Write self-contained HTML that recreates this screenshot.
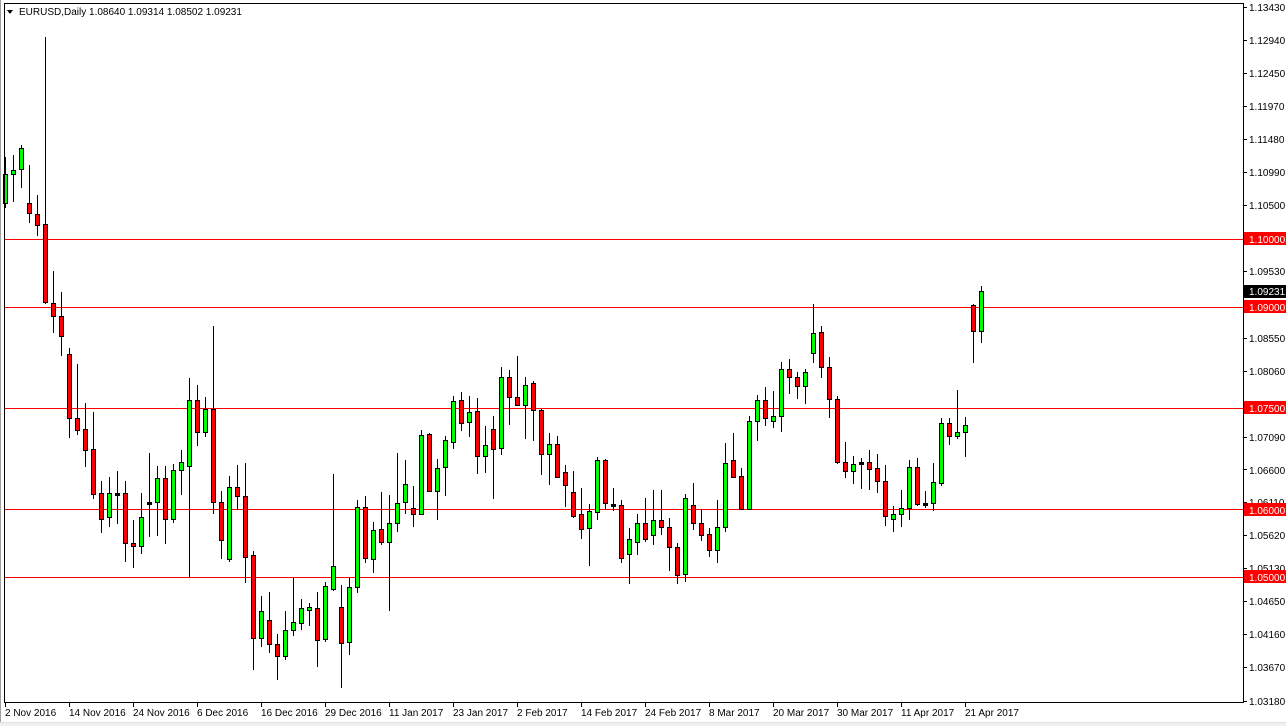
<!DOCTYPE html>
<html><head><meta charset="utf-8"><style>
body{margin:0;background:#fff;width:1286px;height:726px;overflow:hidden;font-family:"Liberation Sans",sans-serif}
svg{position:absolute;left:0;top:0}
text{font-family:"Liberation Sans",sans-serif;font-size:10px}
</style></head><body>
<svg id="s" width="1286" height="726" xmlns="http://www.w3.org/2000/svg" shape-rendering="crispEdges">
<rect x="0" y="0" width="1286" height="726" fill="#fff"/>
<rect x="0" y="0" width="1" height="726" fill="#a0a0a0"/>
<rect x="0" y="723" width="1286" height="3" fill="#f0f0f0"/>
<rect x="0" y="722" width="1286" height="1" fill="#e0e0e0"/>
<g id="lines">
<rect x="4" y="239" width="1239" height="1" fill="#f00"/>
<rect x="4" y="307" width="1239" height="1" fill="#f00"/>
<rect x="4" y="408" width="1239" height="1" fill="#f00"/>
<rect x="4" y="509" width="1239" height="1" fill="#f00"/>
<rect x="4" y="577" width="1239" height="1" fill="#f00"/>
</g>
<g id="c"></g>
<rect x="4" y="3" width="1239" height="1" fill="#000"/>
<rect x="4" y="702" width="1239" height="1" fill="#000"/>
<rect x="4" y="3" width="1" height="700" fill="#000"/>
<rect x="1243" y="3" width="1" height="700" fill="#000"/>
<polygon points="7,10 13,10 10,14" fill="#000"/>
<text x="19" y="15" fill="#000">EURUSD,Daily  1.08640 1.09314 1.08502 1.09231</text>
<g fill="#000">
<text x="1249" y="11">1.13430</text>
<text x="1249" y="44">1.12940</text>
<text x="1249" y="77">1.12450</text>
<text x="1249" y="110">1.11970</text>
<text x="1249" y="143">1.11480</text>
<text x="1249" y="176">1.10990</text>
<text x="1249" y="209">1.10500</text>
<text x="1249" y="275">1.09530</text>
<text x="1249" y="342">1.08550</text>
<text x="1249" y="375">1.08060</text>
<text x="1249" y="408">1.07570</text>
<text x="1249" y="441">1.07090</text>
<text x="1249" y="474">1.06600</text>
<text x="1249" y="506">1.06110</text>
<text x="1249" y="539">1.05620</text>
<text x="1249" y="572">1.05130</text>
<text x="1249" y="605">1.04650</text>
<text x="1249" y="638">1.04160</text>
<text x="1249" y="671">1.03670</text>
<text x="1249" y="705">1.03180</text>
</g>
<g id="ticks"></g>
<rect x="1244" y="232" width="42" height="13" fill="#f00"/><text x="1249" y="243" fill="#fff">1.10000</text>
<rect x="1244" y="285" width="42" height="13" fill="#000"/><text x="1249" y="295" fill="#fff">1.09231</text>
<rect x="1244" y="300" width="42" height="13" fill="#f00"/><text x="1249" y="311" fill="#fff">1.09000</text>
<rect x="1244" y="401" width="42" height="13" fill="#f00"/><text x="1249" y="412" fill="#fff">1.07500</text>
<rect x="1244" y="503" width="42" height="13" fill="#f00"/><text x="1249" y="514" fill="#fff">1.06000</text>
<rect x="1244" y="570" width="42" height="13" fill="#f00"/><text x="1249" y="581" fill="#fff">1.05000</text>
<g fill="#000">
<text x="5" y="716">2 Nov 2016</text>
<text x="69" y="716">14 Nov 2016</text>
<text x="133" y="716">24 Nov 2016</text>
<text x="197" y="716">6 Dec 2016</text>
<text x="261" y="716">16 Dec 2016</text>
<text x="325" y="716">29 Dec 2016</text>
<text x="389" y="716">11 Jan 2017</text>
<text x="453" y="716">23 Jan 2017</text>
<text x="517" y="716">2 Feb 2017</text>
<text x="581" y="716">14 Feb 2017</text>
<text x="645" y="716">24 Feb 2017</text>
<text x="709" y="716">8 Mar 2017</text>
<text x="773" y="716">20 Mar 2017</text>
<text x="837" y="716">30 Mar 2017</text>
<text x="901" y="716">11 Apr 2017</text>
<text x="965" y="716">21 Apr 2017</text>
</g>
</svg>
<script>
var d=[
"G157174203207","G155170174201","G145148169187","R165203213222","R195214225235","R037224302303","R271303316332","R292316336355","R348354418437","R364418430434","R403429450466","R412449494498","R481493519532","G477493517526","R471493495523","R481493543561","R520543546567","G493517546553","G453502504536","G466478502535","R466478519543","G464470519522","G450462470494","G378400466576","R385400432445","G397409432436","R326409502513","R491502540558","G476487559561","R465487496509","R463496557582",
"R551555638669","G596611638646","R592620644652","R634644656679","G611630656659","G578622630635","G599608623629","G603607610625","R592608640666","G582586639641","G474566589590","R585607643687","G578587642654","G500507587592","R496507558562","G522530559572","R492529542544","G495523542610","G453503523531","G460484502513","R486508514526","G430435514514","R433434491491","G459468491519","G436440467495","G396401442448","R392400423430","G396412422436","R398411456473","G426445456472",
"R416429449498","G367377448454","R370377397424","R356397405405","G377385405438","R381383410440","R409410454474","G433444454484","R436444477477","R465472485506","R471492516517","R488514529538","G504511528565","G457460512519","R459460503508","G488504506510","R500505558562","G528539554583","G514523542554","R498523539541","G490520535544","R490520527534","R518527547570","R543547575583","G494498574581","R483505523529","R509523535540","R528534550556","G500527550562","G443463527531",
"R433460477477","R468476509509","G416421509509","G395400421440","R387400418425","G391416421427","G362369416431","R359369377393","R372377386398","G369372386403","G304333353362","R326332367377","R357367399417","R396399462463","R442462471477","G456464471483","G458462464488","R450462469489","R454468481492","R465481516525","G506514519531","G490508514526","G460467508519","R458467504505","G491503504507","G463482503510","G418423483485","R418423436444","G390432436438","G417425432456","R304305331362","G286291331342"];
var g='';
d.forEach(function(s,k){
 var c=s[0],h=+s.substr(1,3),t=+s.substr(4,3),b=+s.substr(7,3),l=+s.substr(10,3);
 var x=5+8*k;
 g+='<rect x="'+x+'" y="'+h+'" width="1" height="'+(l-h+1)+'" fill="#000"/>';
 var bh=Math.max(b-t,2);
 g+='<rect x="'+(x-2)+'" y="'+t+'" width="5" height="'+(bh+1)+'" fill="#000"/>';
 if(bh>2)g+='<rect x="'+(x-1)+'" y="'+(t+1)+'" width="3" height="'+(bh-1)+'" fill="'+(c=='G'?'#00ff00':'#ff0000')+'"/>';
});
document.getElementById('c').innerHTML=g;
var tk='';
[7,40,73,106,139,172,205,271,338,371,404,437,469,502,535,568,601,634,667,701].forEach(function(y){tk+='<rect x="1244" y="'+y+'" width="3" height="1" fill="#000"/>';});
[5,69,133,197,261,325,389,453,517,581,645,709,773,837,901,965].forEach(function(x){tk+='<rect x="'+x+'" y="703" width="1" height="4" fill="#000"/>';});
document.getElementById('ticks').innerHTML=tk;
</script>
</body></html>
